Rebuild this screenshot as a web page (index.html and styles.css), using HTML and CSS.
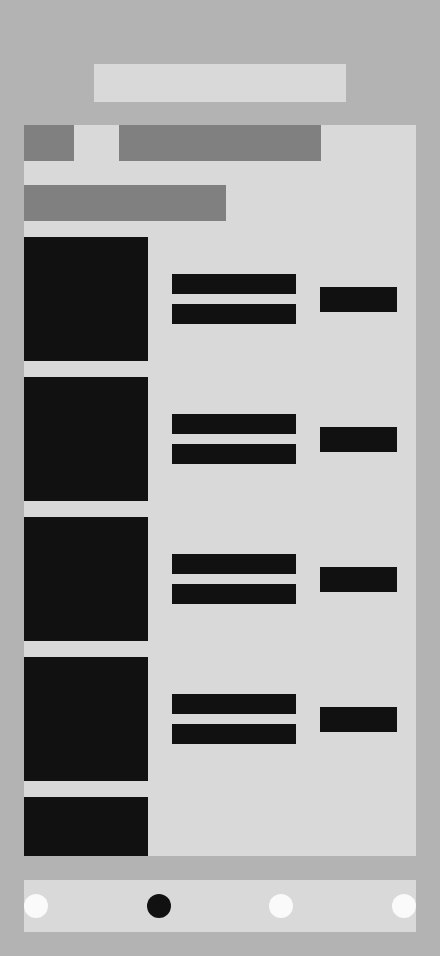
FILE: index.html
```html
<!DOCTYPE html>
<html lang="en">
<head>
    <meta charset="utf-8">
    <link rel="stylesheet" href="styles.css">
    <title>List</title>
</head>
<body>
    <div class="search-bar"></div>

    <div class="panel">
        <div class="header-row">
            <div class="tag tag-small"></div>
            <div class="tag tag-wide"></div>
        </div>
        <div class="tag tag-wide title"></div>

        <div class="list">
            <div class="item">
                <div class="thumb"></div>
                <div class="lines">
                    <div class="line"></div>
                    <div class="line"></div>
                </div>
                <div class="price"></div>
            </div>
            <div class="item">
                <div class="thumb"></div>
                <div class="lines">
                    <div class="line"></div>
                    <div class="line"></div>
                </div>
                <div class="price"></div>
            </div>
            <div class="item">
                <div class="thumb"></div>
                <div class="lines">
                    <div class="line"></div>
                    <div class="line"></div>
                </div>
                <div class="price"></div>
            </div>
            <div class="item">
                <div class="thumb"></div>
                <div class="lines">
                    <div class="line"></div>
                    <div class="line"></div>
                </div>
                <div class="price"></div>
            </div>
            <div class="item">
                <div class="thumb"></div>
            </div>
        </div>
    </div>

    <div class="nav">
        <span class="dot"></span>
        <span class="dot active"></span>
        <span class="dot"></span>
        <span class="dot"></span>
    </div>
</body>
</html>
```

FILE: styles.css
```css
body {
    margin: 0;
    background-color: #b3b3b3;
    font-family: "Liberation Sans", sans-serif;
    width: 440px;
    height: 956px;
    overflow: hidden;
}

.search-bar {
    width: 252px;
    height: 38px;
    margin: 64px auto 0;
    background-color: #d9d9d9;
}

.panel {
    margin: 23px 24px 0;
    height: 731px;
    background-color: #d9d9d9;
    overflow: hidden;
    display: flex;
    flex-direction: column;
}

.panel > * {
    flex-shrink: 0;
}

.header-row {
    display: flex;
    gap: 45px;
}

.tag {
    height: 36px;
    background-color: #808080;
}

.tag-small {
    width: 50px;
}

.tag-wide {
    width: 202px;
}

.title {
    margin-top: 24px;
}

.list {
    margin-top: 16px;
    display: flex;
    flex-direction: column;
    gap: 16px;
}

.item {
    display: flex;
    align-items: center;
    flex-shrink: 0;
    height: 124px;
}

.thumb {
    width: 124px;
    height: 124px;
    background-color: #111;
}

.lines {
    margin-left: 24px;
    width: 124px;
    display: flex;
    flex-direction: column;
    gap: 10px;
}

.line {
    height: 20px;
    background-color: #111;
}

.price {
    margin-left: 24px;
    width: 77px;
    height: 25px;
    background-color: #111;
}

.nav {
    margin: 24px 24px 0;
    height: 52px;
    background-color: #d9d9d9;
    display: flex;
    align-items: center;
    justify-content: space-between;
}

.dot {
    width: 24px;
    height: 24px;
    border-radius: 50%;
    background-color: #fafafa;
}

.dot.active {
    background-color: #111;
}
```
